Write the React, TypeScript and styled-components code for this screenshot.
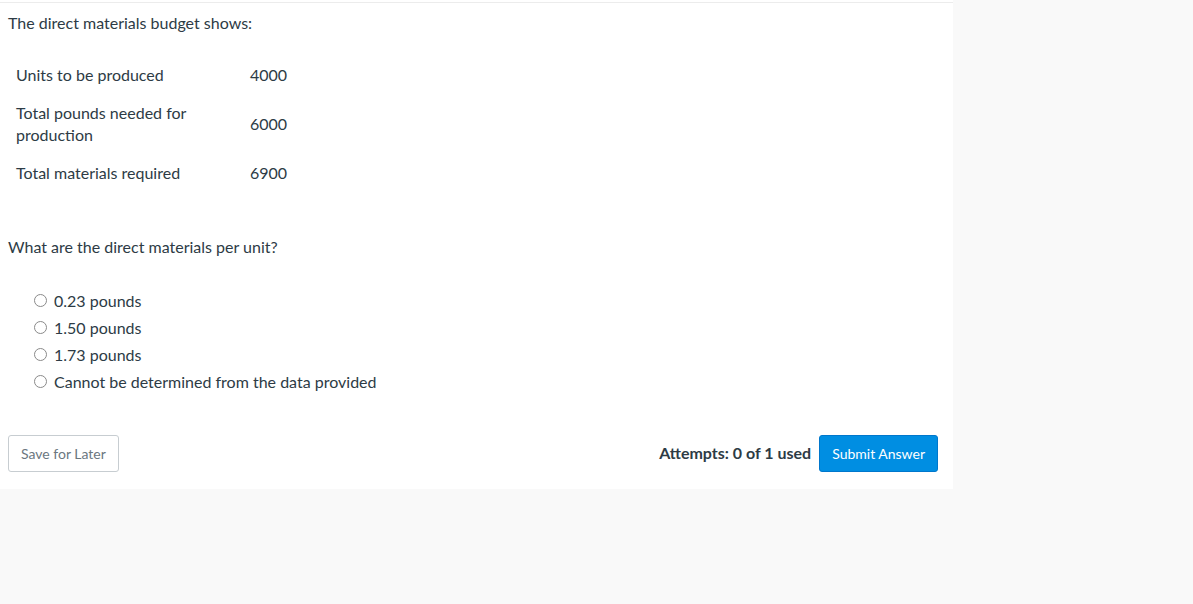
import styled, { createGlobalStyle } from 'styled-components';

const GlobalStyle = createGlobalStyle`
    body {
        margin: 0;
        background-color: #f9f9f9;
        font-family: Lato, "Open Sans", sans-serif;
        color: #2d3b45;
    }
`

const Panel = styled.div`
    width: 953px;
    background-color: #ffffff;
    padding-top: 2px;
    padding-bottom: 17px;
`

const QuestionBody = styled.div`
    border-top: 1px solid #ececec;
    padding: 8px 8px 0 8px;
`

const Text = styled.p`
    margin: 0;
    font-size: 16px;
    line-height: 24px;
`

const BudgetTable = styled.table`
    margin: 21px 0 43px 0;
    border-collapse: collapse;
    font-size: 16px;
    line-height: 22px;

    td {
        padding: 8px;
        vertical-align: middle;
    }

    td.label {
        width: 218px;
    }
`

const Options = styled.div`
    margin-top: 28px;
    padding-left: 26px;
`

const Option = styled.label`
    display: flex;
    align-items: center;
    height: 27px;
    font-size: 16px;
    gap: 7px;
`

const Radio = styled.span`
    width: 11px;
    height: 11px;
    border: 1px solid #8a8a8a;
    border-radius: 50%;
    background-color: #ffffff;
`

const Footer = styled.div`
    display: flex;
    align-items: center;
    padding: 0 15px 0 8px;
    margin-top: 40px;
`

const Attempts = styled.span`
    margin-left: auto;
    margin-right: 8px;
    padding-bottom: 3px;
    font-size: 16px;
    font-weight: 700;
`

const Button = styled.button<{ $primary?: boolean }>`
    height: 37px;
    padding: 0 12px;
    font-family: Lato, "Open Sans", sans-serif;
    font-size: 14px;
    border-radius: 3px;
    border: 1px solid ${p => p.$primary ? '#0077cc' : '#c7cdd1'};
    background-color: ${p => p.$primary ? '#008ee2' : '#ffffff'};
    color: ${p => p.$primary ? '#ffffff' : '#6b7780'};
`

const rows = [
    { label: 'Units to be produced', value: '4000' },
    { label: 'Total pounds needed for production', value: '6000' },
    { label: 'Total materials required', value: '6900' },
];

const answers = ['0.23 pounds', '1.50 pounds', '1.73 pounds', 'Cannot be determined from the data provided'];

export default function App() {
    return <>
        <GlobalStyle />
        <Panel>
            <QuestionBody>
                <Text>The direct materials budget shows:</Text>
                <BudgetTable>
                    <tbody>
                        {rows.map(r => (
                            <tr key={r.label}>
                                <td className="label">{r.label}</td>
                                <td>{r.value}</td>
                            </tr>
                        ))}
                    </tbody>
                </BudgetTable>
                <Text>What are the direct materials per unit?</Text>
                <Options>
                    {answers.map(a => (
                        <Option key={a}>
                            <Radio />
                            {a}
                        </Option>
                    ))}
                </Options>
            </QuestionBody>
            <Footer>
                <Button>Save for Later</Button>
                <Attempts>Attempts: 0 of 1 used</Attempts>
                <Button $primary>Submit Answer</Button>
            </Footer>
        </Panel>
    </>
}
